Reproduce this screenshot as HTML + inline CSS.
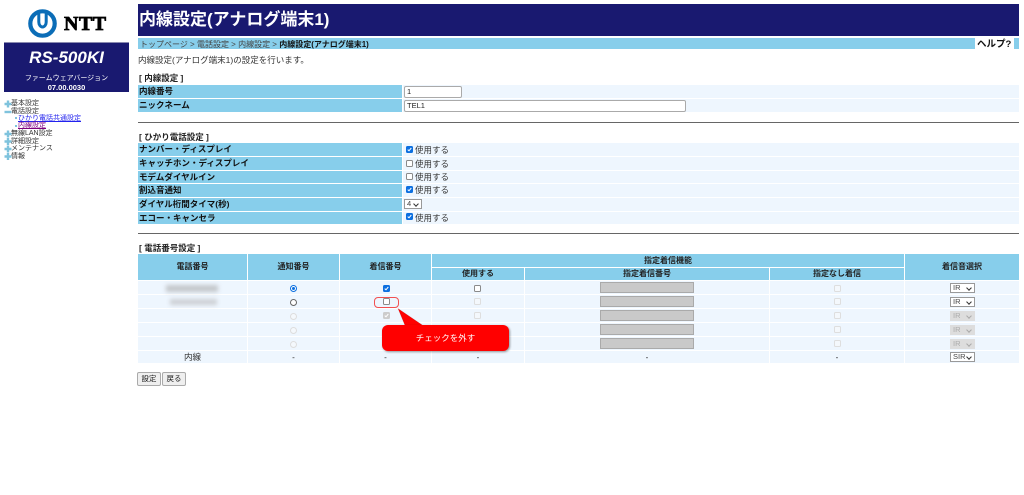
<!DOCTYPE html>
<html lang="ja">
<head>
<meta charset="utf-8">
<title>内線設定(アナログ端末1)</title>
<style>
html,body{margin:0;padding:0;background:#fff;width:1024px;height:495px;overflow:hidden}
body{font-family:"Liberation Sans","Noto Sans CJK JP",sans-serif;font-size:8px;color:#222;position:relative;filter:blur(.3px)}
div,span,input,select,button,svg,a{position:absolute;box-sizing:border-box}
.t{white-space:nowrap;line-height:12px}
.b{font-weight:bold}
.h{background:#87ceeb;font-weight:bold;color:#111;line-height:12px;white-space:nowrap;padding-left:1px;font-size:8.5px}
.v{background:#eef6fe}
.c{background:#87ceeb;font-weight:bold;text-align:center;color:#222;line-height:13px}
.d{background:#eef6fe;text-align:center;line-height:14px}
.cx{width:7px;height:7px;border:1px solid #8a8a8a;border-radius:1.5px;background:#fff}
.cx.dis{border-color:#dedede;background:#f4f8fc}
.cx.on{background:#0b6fe0;border-color:#0b6fe0}
.cx.gr{background:#ccc;border-color:#ccc}
.cx svg{left:0;top:0}
.ra{width:7px;height:7px;border:1px solid #666;border-radius:50%;background:#fff}
.ra.dis{border-color:#ddd;background:#f4f8fc}
.ra.on{border-color:#0b6fe0}
.ra.on:after{content:"";position:absolute;left:1px;top:1px;width:3px;height:3px;border-radius:50%;background:#0b6fe0}
.sel{width:25px;height:10px;background:#fff;border:1px solid #999;font-size:7.5px;line-height:8px;padding-left:2px;color:#444;left:950px}
.sel.dis{background:#ddd;border-color:#ddd;color:#aaa}
.sel:after{content:"";position:absolute;right:3px;top:1.5px;width:3px;height:3px;border-right:1px solid #333;border-bottom:1px solid #333;transform:rotate(45deg)}
.sel.dis:after{border-color:#aaa}
.tb{left:600px;width:94px;height:11px;background:#c9c9c9;border:1px solid #aaa}
.btn{height:14px;top:372px;background:#efefef;border:1px solid #aaa;border-radius:2px;text-align:center;line-height:12px;font-size:7.5px;color:#222}
.hr{left:138px;width:881px;height:1px;background:#666}
.use{left:415px;font-size:8.5px;color:#333}
.m{left:11px;font-size:7px;line-height:10px;color:#333;white-space:nowrap}
</style>
</head>
<body>
<!-- Sidebar -->
<svg style="left:27px;top:9px" width="32" height="30" viewBox="0 0 32 30">
<circle cx="15.5" cy="14.5" r="12.2" fill="none" stroke="#0b6db7" stroke-width="4.2"/>
<path d="M11.8 3V13A3.7 5 0 0 0 19.2 13V3" fill="none" stroke="#0b6db7" stroke-width="3"/>
</svg>
<div class="t" style="left:64px;top:14px;font:bold 20px/20px 'Liberation Serif',serif;color:#000;letter-spacing:0.5px;-webkit-text-stroke:.8px #000">NTT</div>
<div style="left:4px;top:42px;width:125px;height:50px;background:#191970;border-top:1px solid #8a8ab0"></div>
<div class="t" style="left:4px;width:125px;top:48px;text-align:center;color:#fff;font:italic bold 17px/20px 'Liberation Sans',sans-serif">RS-500KI</div>
<div class="t" style="left:4px;width:125px;top:73px;text-align:center;color:#fff;font-size:7px;line-height:11px">ファームウェアバージョン</div>
<div class="t b" style="left:4px;width:125px;top:82px;text-align:center;color:#fff;font:bold 7.5px/11px 'Liberation Sans',sans-serif">07.00.0030</div>

<svg style="left:4px;top:100px" width="8" height="62" viewBox="0 0 8 62">
<g stroke="#7fc3dd" stroke-width="2.4" fill="none">
<path d="M0.5 4h7M4 .5v7"/>
<path d="M0.5 12h7"/>
<path d="M0.5 34h7M4 30.500v7"/>
<path d="M0.5 41.500h7M4 38v7"/>
<path d="M0.500 49h7M4 45.500v7"/>
<path d="M0.500 56.500h7M4 53v7"/>
</g>
</svg>
<div style="left:15px;top:117px;width:2px;height:2px;background:#7fc3dd"></div>
<div style="left:15px;top:125px;width:2px;height:2px;background:#7fc3dd"></div>
<div class="m" style="top:99px">基本設定</div>
<div class="m" style="top:106.500px">電話設定</div>
<div class="m" style="left:18px;top:113.500px;color:#2222ee;text-decoration:underline">ひかり電話共通設定</div>
<div class="m" style="left:18px;top:121px;color:#800080;text-decoration:underline">内線設定</div>
<div class="m" style="top:129px">無線LAN設定</div>
<div class="m" style="top:136.500px">詳細設定</div>
<div class="m" style="top:144px">メンテナンス</div>
<div class="m" style="top:151.500px">情報</div>

<!-- Header -->
<div style="left:138px;top:4px;width:881px;height:32px;background:#191970"></div>
<div class="t b" style="left:139px;top:10px;font-size:17px;line-height:20px;color:#fff">内線設定(アナログ端末1)</div>
<div style="left:138px;top:38px;width:881px;height:11px;background:#87ceeb"></div>
<div style="left:975px;top:38px;width:39px;height:11px;background:#fff"></div>
<div class="t b" style="left:977px;top:38.500px;font-size:9.500px;line-height:11px;color:#111">ヘルプ?</div>
<div class="t" style="left:140px;top:38.500px;font-size:8px;line-height:11px;color:#444">トップページ &gt; 電話設定 &gt; 内線設定 &gt; <span class="b" style="position:static;color:#111">内線設定(アナログ端末1)</span></div>
<div class="t" style="left:138px;top:54px;font-size:8.500px;color:#333">内線設定(アナログ端末1)の設定を行います。</div>

<!-- Section 1 -->
<div class="t b" style="left:139px;top:72px;font-size:8.500px">[ 内線設定 ]</div>
<div class="h" style="left:138px;top:85px;width:264px;height:13px">内線番号</div>
<div class="v" style="left:403px;top:85px;width:616px;height:13px"></div>
<div class="h" style="left:138px;top:99px;width:264px;height:13px">ニックネーム</div>
<div class="v" style="left:403px;top:99px;width:616px;height:13px"></div>
<div class="t" style="left:404px;top:86px;width:58px;height:12px;background:#fff;border:1px solid #aaa;border-radius:2px;font-size:7.500px;line-height:10px;padding-left:2px">1</div>
<div class="t" style="left:404px;top:100px;width:282px;height:12px;background:#fff;border:1px solid #aaa;border-radius:2px;font-size:7.500px;line-height:10px;padding-left:2px">TEL1</div>
<div class="hr" style="top:122px"></div>

<!-- Section 2 -->
<div class="t b" style="left:139px;top:131px;font-size:8.500px">[ ひかり電話設定 ]</div>
<div class="h" style="left:138px;top:143px;width:264px;height:13px">ナンバー・ディスプレイ</div>
<div class="v" style="left:403px;top:143px;width:616px;height:13px"></div>
<div class="h" style="left:138px;top:157px;width:264px;height:12.500px">キャッチホン・ディスプレイ</div>
<div class="v" style="left:403px;top:157px;width:616px;height:12.500px"></div>
<div class="h" style="left:138px;top:171px;width:264px;height:12px">モデムダイヤルイン</div>
<div class="v" style="left:403px;top:171px;width:616px;height:12px"></div>
<div class="h" style="left:138px;top:184px;width:264px;height:12.500px">割込音通知</div>
<div class="v" style="left:403px;top:184px;width:616px;height:12.500px"></div>
<div class="h" style="left:138px;top:198px;width:264px;height:12.500px">ダイヤル桁間タイマ(秒)</div>
<div class="v" style="left:403px;top:198px;width:616px;height:12.500px"></div>
<div class="h" style="left:138px;top:212px;width:264px;height:12px">エコー・キャンセラ</div>
<div class="v" style="left:403px;top:212px;width:616px;height:12px"></div>

<div class="cx on" style="left:406px;top:146px"><svg width="5" height="5" viewBox="0 0 5 5"><path d="M.7 2.600 2 3.800 4.300 1" fill="none" stroke="#fff" stroke-width="1"/></svg></div>
<div class="t use" style="top:144px">使用する</div>
<div class="cx" style="left:406px;top:160px"></div>
<div class="t use" style="top:157.500px">使用する</div>
<div class="cx" style="left:406px;top:173px"></div>
<div class="t use" style="top:171px">使用する</div>
<div class="cx on" style="left:406px;top:186px"><svg width="5" height="5" viewBox="0 0 5 5"><path d="M.7 2.600 2 3.800 4.300 1" fill="none" stroke="#fff" stroke-width="1"/></svg></div>
<div class="t use" style="top:184px">使用する</div>
<div class="sel" style="left:404px;top:199px;width:18px">4</div>
<div class="cx on" style="left:406px;top:213px"><svg width="5" height="5" viewBox="0 0 5 5"><path d="M.7 2.600 2 3.800 4.300 1" fill="none" stroke="#fff" stroke-width="1"/></svg></div>
<div class="t use" style="top:212px">使用する</div>
<div class="hr" style="top:233px"></div>

<!-- Section 3 -->
<div class="t b" style="left:139px;top:241.500px;font-size:8.500px">[ 電話番号設定 ]</div>
<div class="c" style="left:138px;top:254px;width:109px;height:26px;line-height:26px">電話番号</div>
<div class="c" style="left:248px;top:254px;width:91px;height:26px;line-height:26px">通知番号</div>
<div class="c" style="left:340px;top:254px;width:91px;height:26px;line-height:26px">着信番号</div>
<div class="c" style="left:432px;top:254px;width:472px;height:13px">指定着信機能</div>
<div class="c" style="left:905px;top:254px;width:114px;height:26px;line-height:26px">着信音選択</div>
<div class="c" style="left:432px;top:268px;width:92px;height:12px;line-height:12px">使用する</div>
<div class="c" style="left:525px;top:268px;width:244px;height:12px;line-height:12px">指定着信番号</div>
<div class="c" style="left:770px;top:268px;width:134px;height:12px;line-height:12px">指定なし着信</div>

<!-- Row backgrounds -->
<div class="v" style="left:138px;top:281px;width:109px;height:13px"></div><div class="v" style="left:248px;top:281px;width:91px;height:13px"></div><div class="v" style="left:340px;top:281px;width:91px;height:13px"></div><div class="v" style="left:432px;top:281px;width:92px;height:13px"></div><div class="v" style="left:525px;top:281px;width:244px;height:13px"></div><div class="v" style="left:770px;top:281px;width:134px;height:13px"></div><div class="v" style="left:905px;top:281px;width:114px;height:13px"></div>
<div class="v" style="left:138px;top:295px;width:109px;height:13px"></div><div class="v" style="left:248px;top:295px;width:91px;height:13px"></div><div class="v" style="left:340px;top:295px;width:91px;height:13px"></div><div class="v" style="left:432px;top:295px;width:92px;height:13px"></div><div class="v" style="left:525px;top:295px;width:244px;height:13px"></div><div class="v" style="left:770px;top:295px;width:134px;height:13px"></div><div class="v" style="left:905px;top:295px;width:114px;height:13px"></div>
<div class="v" style="left:138px;top:309px;width:109px;height:13px"></div><div class="v" style="left:248px;top:309px;width:91px;height:13px"></div><div class="v" style="left:340px;top:309px;width:91px;height:13px"></div><div class="v" style="left:432px;top:309px;width:92px;height:13px"></div><div class="v" style="left:525px;top:309px;width:244px;height:13px"></div><div class="v" style="left:770px;top:309px;width:134px;height:13px"></div><div class="v" style="left:905px;top:309px;width:114px;height:13px"></div>
<div class="v" style="left:138px;top:323px;width:109px;height:13px"></div><div class="v" style="left:248px;top:323px;width:91px;height:13px"></div><div class="v" style="left:340px;top:323px;width:91px;height:13px"></div><div class="v" style="left:432px;top:323px;width:92px;height:13px"></div><div class="v" style="left:525px;top:323px;width:244px;height:13px"></div><div class="v" style="left:770px;top:323px;width:134px;height:13px"></div><div class="v" style="left:905px;top:323px;width:114px;height:13px"></div>
<div class="v" style="left:138px;top:337px;width:109px;height:13px"></div><div class="v" style="left:248px;top:337px;width:91px;height:13px"></div><div class="v" style="left:340px;top:337px;width:91px;height:13px"></div><div class="v" style="left:432px;top:337px;width:92px;height:13px"></div><div class="v" style="left:525px;top:337px;width:244px;height:13px"></div><div class="v" style="left:770px;top:337px;width:134px;height:13px"></div><div class="v" style="left:905px;top:337px;width:114px;height:13px"></div>
<div class="d" style="left:138px;top:351px;width:109px;height:12px;line-height:12px;font-size:8.500px;color:#333">内線</div><div class="d" style="left:248px;top:351px;width:91px;height:12px">-</div><div class="d" style="left:340px;top:351px;width:91px;height:12px">-</div><div class="d" style="left:432px;top:351px;width:92px;height:12px">-</div><div class="d" style="left:525px;top:351px;width:244px;height:12px">-</div><div class="d" style="left:770px;top:351px;width:134px;height:12px">-</div><div class="v" style="left:905px;top:351px;width:114px;height:12px"></div>

<!-- Blurred numbers -->
<div style="left:166px;top:285px;width:52px;height:7px;background:#c4c7cb;filter:blur(2px)"></div>
<div style="left:170px;top:299px;width:47px;height:6px;background:#cdd0d4;filter:blur(2px)"></div>

<!-- Radios -->
<div class="ra on" style="left:290px;top:285px"></div>
<div class="ra" style="left:290px;top:299px"></div>
<div class="ra dis" style="left:290px;top:313px"></div>
<div class="ra dis" style="left:290px;top:327px"></div>
<div class="ra dis" style="left:290px;top:341px"></div>

<!-- 着信番号 -->
<div class="cx on" style="left:383px;top:285px"><svg width="5" height="5" viewBox="0 0 5 5"><path d="M.7 2.600 2 3.800 4.300 1" fill="none" stroke="#fff" stroke-width="1"/></svg></div>
<div class="cx" style="left:383px;top:298px"></div>
<div class="cx gr" style="left:383px;top:312px"><svg width="5" height="5" viewBox="0 0 5 5"><path d="M.7 2.600 2 3.800 4.300 1" fill="none" stroke="#fff" stroke-width="1"/></svg></div>

<!-- 使用する -->
<div class="cx" style="left:474px;top:285px"></div>
<div class="cx dis" style="left:474px;top:298px"></div>
<div class="cx dis" style="left:474px;top:312px"></div>
<div class="cx dis" style="left:474px;top:326px"></div>
<div class="cx dis" style="left:474px;top:340px"></div>

<!-- 指定着信番号 -->
<div class="tb" style="top:282px"></div>
<div class="tb" style="top:296px"></div>
<div class="tb" style="top:310px"></div>
<div class="tb" style="top:324px"></div>
<div class="tb" style="top:338px"></div>

<!-- 指定なし -->
<div class="cx dis" style="left:834px;top:285px"></div>
<div class="cx dis" style="left:834px;top:298px"></div>
<div class="cx dis" style="left:834px;top:312px"></div>
<div class="cx dis" style="left:834px;top:326px"></div>
<div class="cx dis" style="left:834px;top:340px"></div>

<!-- 着信音 -->
<div class="sel" style="top:283px">IR</div>
<div class="sel" style="top:297px">IR</div>
<div class="sel dis" style="top:311px">IR</div>
<div class="sel dis" style="top:325px">IR</div>
<div class="sel dis" style="top:339px">IR</div>
<div class="sel" style="top:352px">SIR</div>

<!-- Buttons -->
<div class="btn" style="left:137px;width:24px">設定</div>
<div class="btn" style="left:162px;width:24px">戻る</div>

<!-- Callout -->
<div style="left:374px;top:297px;width:25px;height:11px;border:1px solid #f25050;border-radius:4px"></div>
<svg style="left:390px;top:304px" width="40" height="25" viewBox="0 0 40 25"><path d="M8 4.500 33 21.500 32 21.500H15z" fill="#f00" stroke="#000" stroke-opacity=".12" stroke-width=".6"/></svg>
<div style="left:382px;top:325px;width:127px;height:26px;background:#f00;border-radius:6px;box-shadow:1px 1px 2px rgba(0,0,0,.4)"></div>
<div class="t" style="left:382px;top:331px;width:127px;text-align:center;color:#fff;font-size:8.500px;line-height:14px">チェックを外す</div>
</body>
</html>
